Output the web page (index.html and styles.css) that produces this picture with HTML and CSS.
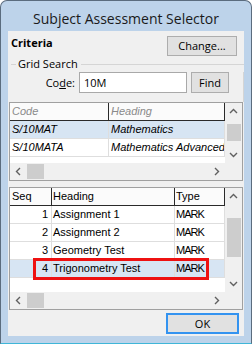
FILE: index.html
```html
<!DOCTYPE html>
<html>
<head>
<meta charset="utf-8">
<link rel="stylesheet" href="styles.css">
</head>
<body>
<div class="window">
  <div class="titlebar">Subject Assessment Selector</div>
  <div class="client">
    <div class="criteria-row">
      <span class="criteria">Criteria</span>
      <button class="btn change">Change...</button>
    </div>
    <div class="group">
      <div class="group-title"><span class="legend">Grid Search</span></div>
      <div class="group-body">
        <div class="code-row">
          <label class="code-label">Co<u>d</u>e:</label>
          <div class="input">10M</div>
          <button class="btn find">Find</button>
        </div>
      </div>
    </div>

    <div class="grid grid1">
      <div class="view">
        <div class="hdr ro">
          <div class="cell c-code">Code</div>
          <div class="cell c-head">Heading</div>
        </div>
        <div class="row ro sel">
          <div class="cell c-code">S/10MAT</div>
          <div class="cell c-head">Mathematics</div>
        </div>
        <div class="row ro">
          <div class="cell c-code">S/10MATA</div>
          <div class="cell c-head">Mathematics Advanced</div>
        </div>
      </div>
      <div class="vscroll">
        <div class="sb-btn"><svg width="17" height="17" viewBox="0 0 17 17"><polyline points="5,10 8.5,6.5 12,10" /></svg></div>
        <div class="track"><div class="thumb thumb1"></div></div>
        <div class="sb-btn"><svg width="17" height="17" viewBox="0 0 17 17"><polyline points="5,7 8.5,10.5 12,7" /></svg></div>
      </div>
      <div class="hscroll">
        <div class="sb-btn"><svg width="17" height="17" viewBox="0 0 17 17"><polyline points="10,5 6.5,8.5 10,12" /></svg></div>
        <div class="hthumb"></div>
        <div class="htrack"></div>
        <div class="sb-btn"><svg width="17" height="17" viewBox="0 0 17 17"><polyline points="7,5 10.5,8.5 7,12" /></svg></div>
      </div>
      <div class="corner"></div>
    </div>

    <div class="grid grid2">
      <div class="view">
        <div class="hdr">
          <div class="cell c-seq">Seq</div>
          <div class="cell c-heading">Heading</div>
          <div class="cell c-type">Type</div>
        </div>
        <div class="row">
          <div class="cell c-seq num">1</div>
          <div class="cell c-heading">Assignment 1</div>
          <div class="cell c-type">MARK</div>
        </div>
        <div class="row">
          <div class="cell c-seq num">2</div>
          <div class="cell c-heading">Assignment 2</div>
          <div class="cell c-type">MARK</div>
        </div>
        <div class="row">
          <div class="cell c-seq num">3</div>
          <div class="cell c-heading">Geometry Test</div>
          <div class="cell c-type">MARK</div>
        </div>
        <div class="row sel">
          <div class="cell c-seq num">4</div>
          <div class="cell c-heading">Trigonometry Test</div>
          <div class="cell c-type">MARK</div>
        </div>
        <div class="highlight"></div>
      </div>
      <div class="vscroll">
        <div class="sb-btn"><svg width="17" height="17" viewBox="0 0 17 17"><polyline points="5,10 8.5,6.5 12,10" /></svg></div>
        <div class="track"><div class="thumb thumb2"></div></div>
        <div class="sb-btn"><svg width="17" height="17" viewBox="0 0 17 17"><polyline points="5,7 8.5,10.5 12,7" /></svg></div>
      </div>
      <div class="hscroll">
        <div class="sb-btn"><svg width="17" height="17" viewBox="0 0 17 17"><polyline points="10,5 6.5,8.5 10,12" /></svg></div>
        <div class="hthumb"></div>
        <div class="htrack"></div>
        <div class="sb-btn"><svg width="17" height="17" viewBox="0 0 17 17"><polyline points="7,5 10.5,8.5 7,12" /></svg></div>
      </div>
      <div class="corner"></div>
    </div>

    <div class="footer">
      <button class="btn ok">OK</button>
    </div>
  </div>
</div>
</body>
</html>
```
FILE: styles.css
```css
* { box-sizing: border-box; }
html, body { margin: 0; padding: 0; }
body {
  width: 252px;
  height: 344px;
  background: #ffffff;
  font-family: "Open Sans", "Noto Sans", sans-serif;
  overflow: hidden;
}
.window {
  width: 252px;
  height: 344px;
  background: #bdd3ea;
  border: 1px solid #5b6c7e;
  border-bottom-color: #3fb6d8;
  border-radius: 7px 7px 0 0;
  display: flex;
  flex-direction: column;
  padding: 0 7px 7px 7px;
}
.titlebar {
  height: 30px;
  padding-top: 6px;
  line-height: 24px;
  font-size: 14px;
  color: #1a1a1a;
  text-align: center;
  white-space: nowrap;
}
.client {
  flex: 1;
  background: #f0f0f0;
  display: flex;
  flex-direction: column;
}
.criteria-row {
  height: 25px;
  display: flex;
  justify-content: space-between;
  align-items: flex-start;
  padding: 4px 7px 0 3px;
}
.criteria {
  font-size: 11px;
  font-weight: bold;
  line-height: 16px;
  color: #000;
}
.btn {
  font-family: "Open Sans", "Noto Sans", sans-serif;
  font-size: 11px;
  color: #000;
  background: #e1e1e1;
  border: 1px solid #adadad;
  padding: 0;
  margin: 0;
  line-height: 16px;
}
.change {
  margin-top: 1px;
  width: 70px;
  height: 20px;
}
.group-title {
  height: 16px;
  display: flex;
  align-items: center;
  font-size: 11px;
  line-height: 16px;
  color: #000;
}
.group-title::before {
  content: "";
  width: 5px;
  margin-left: 3px;
  border-top: 1px solid #d5d5d5;
}
.group-title::after {
  content: "";
  flex: 1;
  border-top: 1px solid #d5d5d5;
}
.legend { padding: 0 3px 0 2px; }
.group-body {
  border-right: 1px solid #d5d5d5;
  padding-bottom: 9px;
}
.code-row {
  height: 21px;
  display: flex;
  align-items: center;
}
.code-label {
  width: 67px;
  margin-right: 4px;
  text-align: right;
  font-size: 11px;
  color: #000;
}
.input {
  width: 108px;
  height: 21px;
  background: #fff;
  border: 1px solid #a9a9a9;
  padding-left: 4px;
  font-size: 11px;
  line-height: 19px;
  color: #000;
}
.find {
  margin-left: 4px;
  width: 38px;
  height: 21px;
}

.grid {
  margin: 0 1px;
  border: 1px solid #a0a0a0;
  background: #ffffff;
  display: grid;
  grid-template-columns: 1fr 17px;
  grid-template-rows: 1fr 17px;
  font-family: "Liberation Sans", Arial, sans-serif;
  font-size: 11px;
  color: #000;
}
.grid1 { height: 79px; }
.grid2 { height: 123px; margin-top: 6px; }
.view {
  position: relative;
  overflow: hidden;
}
.hdr {
  display: flex;
  height: 18px;
  background: #fbfbfb;
  border-bottom: 1px solid #2a2a2a;
}
.row {
  display: flex;
  height: 18px;
  border-bottom: 1px solid #dedede;
}
.row.sel { background: #d7e5f3; }
.cell {
  line-height: 17px;
  padding: 0 2px;
  white-space: nowrap;
  overflow: hidden;
  border-right: 1px solid #dedede;
}
.hdr .cell { border-right-color: #2a2a2a; }
.ro .cell { font-style: italic; }
.hdr.ro .cell { color: #8a8a8a; }
.c-code { width: 99px; }
.c-head { flex: 1; padding-left: 2px; }
.c-seq { width: 42px; }
.c-seq.num { text-align: right; padding-right: 3px; }
.c-heading { width: 123px; padding-left: 1px; }
.c-type { flex: 1; padding-left: 1px; }
.row .c-type { letter-spacing: -1px; }
.highlight {
  position: absolute;
  left: 23px;
  top: 70px;
  width: 176px;
  height: 22px;
  border: 3px solid #ee1111;
}
.vscroll {
  background: #f0f0f0;
  display: flex;
  flex-direction: column;
}
.sb-btn {
  width: 17px;
  height: 17px;
  flex: none;
}
.sb-btn svg { display: block; }
.sb-btn polyline {
  fill: none;
  stroke: #606060;
  stroke-width: 1.4;
}
.track { flex: 1; }
.thumb {
  margin: 0 1px 0 2px;
  background: #cdcdcd;
}
.thumb1 { margin-top: 4px; height: 17px; }
.thumb2 { margin-top: 13px; height: 39px; }
.hscroll {
  background: #f0f0f0;
  display: flex;
}
.hthumb {
  width: 17px;
  margin: 1px 0;
  background: #cdcdcd;
}
.htrack { flex: 1; }
.corner { background: #f0f0f0; }
.footer {
  display: flex;
  justify-content: flex-end;
  padding: 3px 5px 0 0;
}
.ok {
  width: 73px;
  height: 21px;
  border-color: #3393f0;
  box-shadow: inset 0 0 0 1px #3393f0;
}
```
